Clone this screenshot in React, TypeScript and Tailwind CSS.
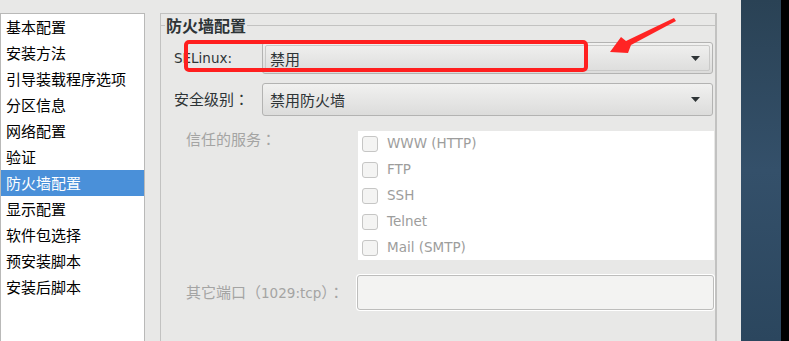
import React from "react"

const menu = [
  "基本配置",
  "安装方法",
  "引导装载程序选项",
  "分区信息",
  "网络配置",
  "验证",
  "防火墙配置",
  "显示配置",
  "软件包选择",
  "预安装脚本",
  "安装后脚本",
]

const services = ["WWW (HTTP)", "FTP", "SSH", "Telnet", "Mail (SMTP)"]

const cjk = "font-['Noto_Sans_CJK_SC','Noto_Sans',sans-serif]"
const tc = "font-['Noto_Sans_CJK_TC',sans-serif]"
const latin = "font-['DejaVu_Sans','Noto_Sans_CJK_SC',sans-serif]"

function Dropdown({ value, focused }: { value: string; focused?: boolean }) {
  return (
    <div className="flex-1 h-full rounded-[3px] border border-[#b3b3b2] bg-gradient-to-b from-[#f1f1f0] to-[#dcdcdb] p-[2px]">
      <div
        className={
          "h-full flex items-center justify-between pl-[4px] pr-[9px] rounded-[2px] border " +
          (focused ? "border-[#c9c9c8]" : "border-transparent")
        }
      >
        <span className={`${cjk} text-[15px] text-[#2e3436] leading-none`}>{value}</span>
        <svg width="9" height="5" viewBox="0 0 9 5">
          <polygon points="0,0 9,0 4.5,5" fill="#2e3436" />
        </svg>
      </div>
    </div>
  )
}

export default function App() {
  return (
    <div className="relative w-[789px] h-[341px] overflow-hidden bg-[#e8e8e7] flex">
      {/* side list */}
      <div className="w-[145px] pt-[13px] shrink-0">
        <div className="h-full bg-white border border-b-0 border-[#b9b9b8]">
          {menu.map((m) => (
            <div
              key={m}
              className={
                `${cjk} h-[26px] flex items-center pl-[5px] pb-[2px] text-[15px] leading-none ` +
                (m === "防火墙配置" ? "bg-[#4a90d9] text-white" : "text-black")
              }
            >
              {m}
            </div>
          ))}
        </div>
      </div>

      {/* main frame */}
      <div className="ml-[15px] w-[557px] pt-[13px] shrink-0">
        <div className="h-full border-l border-t border-r-2 border-[#c2c2c1]">
          <div className="flex items-center h-[20px] mt-[1px]">
            <div className="w-[4px] h-px bg-[#c2c2c1]" />
            <span className={`${cjk} px-[1px] text-[16px] font-bold text-[#2e3436] leading-none`}>防火墙配置</span>
            <div className="flex-1 h-px bg-[#c2c2c1]" />
          </div>

          <div className="pl-[13px] pr-[2px] pt-[7px]">
            <div className="flex items-center h-[32px]">
              <div className={`${latin} w-[88px] text-[13.5px] text-[#2e3436]`}>SELinux:</div>
              <Dropdown value="禁用" focused />
            </div>
            <div className="flex items-center h-[33px] mt-[9px]">
              <div className={`${cjk} w-[88px] text-[15px] text-[#2e3436]`}>
                安全级别<span className={tc}>：</span>
              </div>
              <Dropdown value="禁用防火墙" />
            </div>

            <div className="flex mt-[15px] pl-[12px]">
              <div className={`${cjk} w-[172px] text-[15px] text-[#a4a4a3] leading-[15px]`}>
                信任的服务<span className={tc}>：</span>
              </div>
              <div className="flex-1 bg-white h-[129px] pl-[4px] mr-[-1px]">
                {services.map((s) => (
                  <div key={s} className="h-[26px] flex items-center">
                    <div className="w-[16px] h-[16px] rounded-[3px] border border-[#c6c6c5] bg-[#f4f4f3]" />
                    <span className={`${latin} ml-[9px] text-[13.5px] text-[#9d9d9c] leading-none`}>{s}</span>
                  </div>
                ))}
              </div>
            </div>

            <div className="flex items-center mt-[15px] pl-[12px]">
              <div className={`${cjk} w-[171px] text-[15px] text-[#a4a4a3]`}>
                其它端口<span className={tc}>（</span>
                <span className={latin + " text-[13.5px]"}>1029:tcp</span>
                <span className={tc}>）：</span>
              </div>
              <div className="flex-1 h-[35px] mr-[-1px] rounded-[3px] border border-[#bdbdbc] bg-[#f3f3f2] shadow-[0_0_0_1px_#ffffff]" />
            </div>
          </div>
        </div>
      </div>

      <div className="w-[24px] shrink-0" />
      <div className="w-[40px] shrink-0 bg-gradient-to-b from-[#2a4255] via-[#34506a] to-[#2b465e]" />
      <div className="flex-1 bg-black" />

      {/* annotation overlay */}
      <div className="absolute left-[184px] top-[40px] w-[404px] h-[32px] border-[4px] border-[#ff1f1f] rounded-[5px]" />
      <svg className="absolute left-0 top-0" width="789" height="341" viewBox="0 0 789 341">
        <polygon
          points="674,18 676,21 631,45 628,53 610,52 621,37 626,41"
          fill="#ff2424"
        />
      </svg>
    </div>
  )
}
